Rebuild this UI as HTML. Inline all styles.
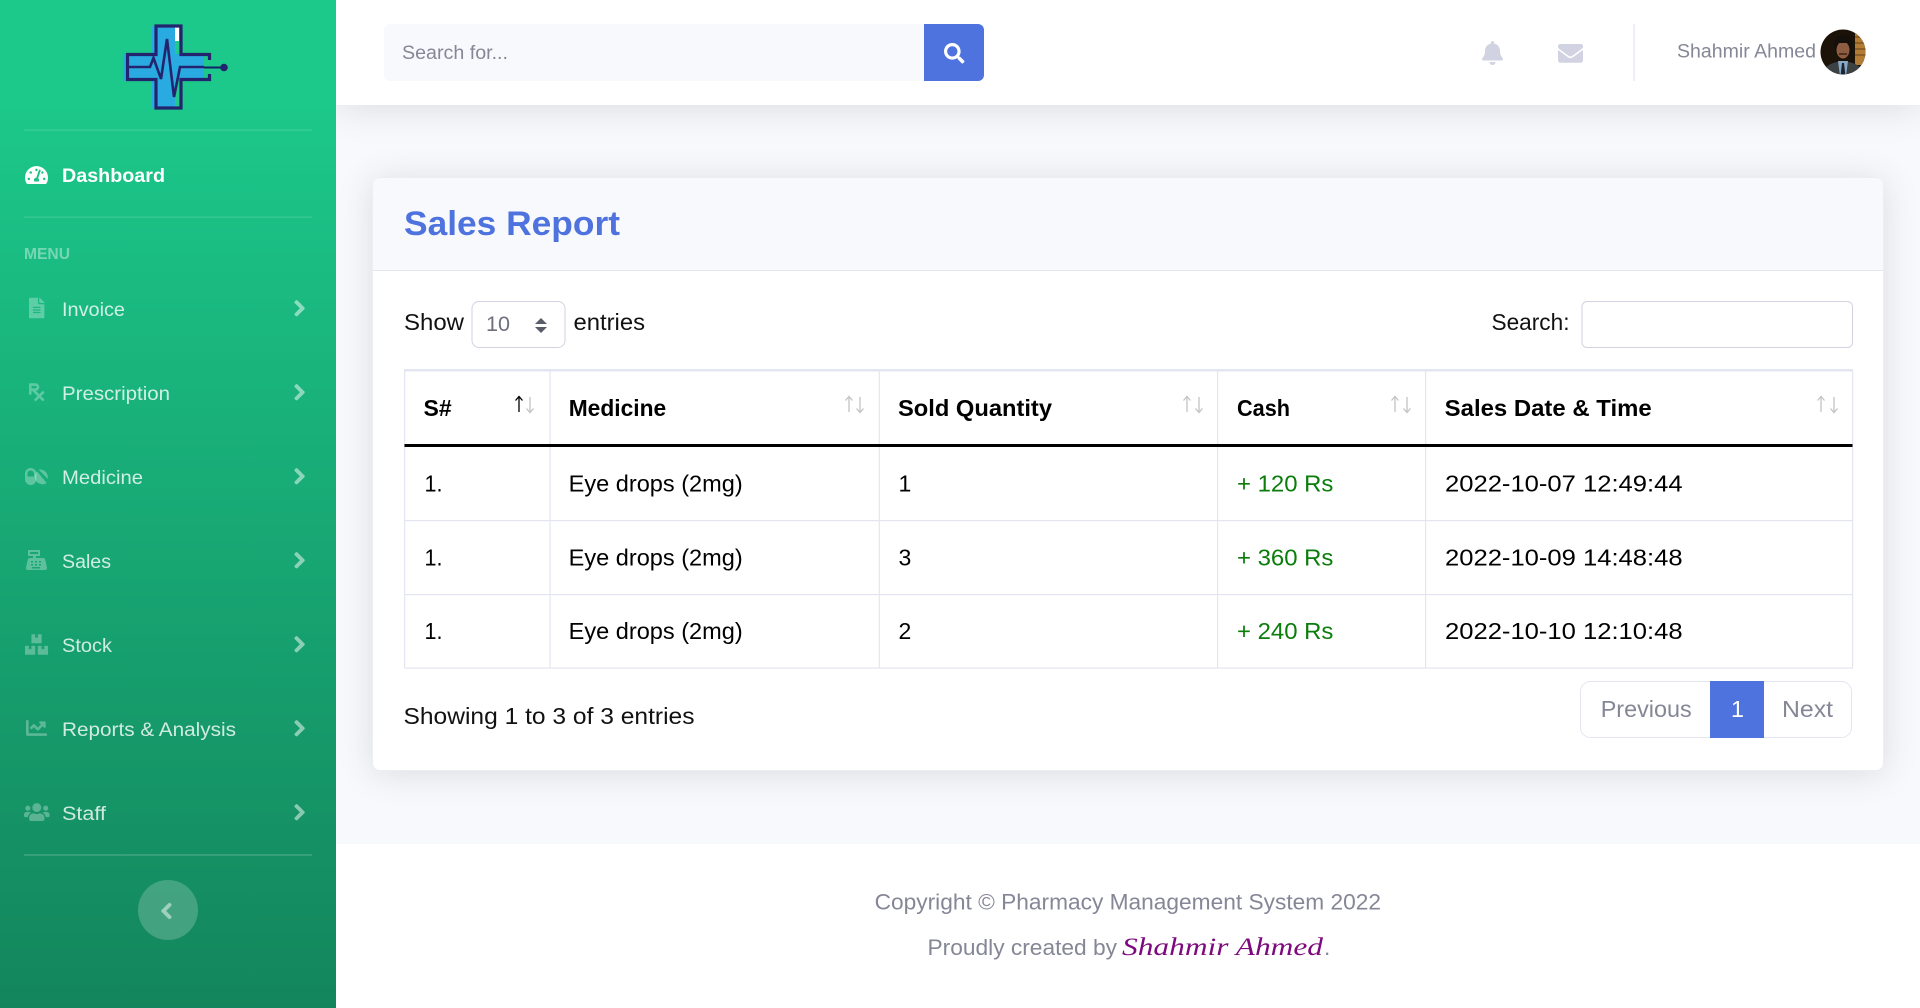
<!DOCTYPE html>
<html lang="en">
<head>
<meta charset="utf-8">
<title>Sales Report</title>
<style>
html,body{margin:0;padding:0;width:1920px;height:1008px;overflow:hidden;background:#f8f9fc;font-family:"Liberation Sans",sans-serif}
.abs{position:absolute;box-sizing:border-box}
#side{left:0;top:0;width:336px;height:1008px;background:linear-gradient(180deg,#1cc88a 10%,#13855c 100%);z-index:3}
#top{left:336px;top:0;width:1584px;height:105px;background:#fff;box-shadow:0 3px 34px rgba(58,59,69,.15);z-index:2}
#card{left:372px;top:177px;width:1512px;height:594px;background:#fff;border:1px solid #eceef5;border-radius:8px;box-shadow:0 3px 34px rgba(58,59,69,.15);overflow:hidden;z-index:1}
#chead{left:0;top:0;width:100%;height:93px;background:#f8f9fc;border-bottom:1.5px solid #e3e6f0}
#foot{left:336px;top:844px;width:1584px;height:164px;background:#fff;z-index:1}
svg#o{position:absolute;left:0;top:0;z-index:4;font-family:"Liberation Sans",sans-serif}
</style>
</head>
<body>
<div id="side" class="abs"></div>
<div id="top" class="abs"></div>
<div id="card" class="abs"><div id="chead" class="abs"></div></div>
<div id="foot" class="abs"></div>

<svg id="o" width="1920" height="1008" viewBox="0 0 1920 1008" xmlns="http://www.w3.org/2000/svg">
<defs>
<path id="chev" d="M285.476 272.971L91.132 467.314c-9.373 9.373-24.569 9.373-33.941 0l-22.667-22.667c-9.357-9.357-9.375-24.522-.04-33.901L188.505 256 34.484 101.255c-9.335-9.379-9.317-24.544.04-33.901l22.667-22.667c9.373-9.373 24.569-9.373 33.941 0L285.475 239.03c9.373 9.372 9.373 24.568.001 33.941z"/>
<clipPath id="av"><circle cx="1843" cy="52" r="22.5"/></clipPath>
<path id="au" d="M0 16V1M-3.5 4.5L0 .5L3.5 4.5" fill="none" stroke-width="1.3"/>
<path id="ad" d="M0 0V15M-3.5 11.5L0 15.5L3.5 11.5" fill="none" stroke-width="1.3"/>
</defs>

<!-- SIDEBAR -->
<g fill="#fff" fill-opacity=".15">
<rect x="24" y="129.5" width="288" height="1.2"/>
<rect x="24" y="216.5" width="288" height="1.2"/>
<rect x="24" y="854" width="288" height="2"/>
</g>
<!-- logo -->
<g>
<path d="M152 26h23v28h29v27h-29v27h-23V81h-29V54h29z" fill="#29abe2"/>
<rect x="175" y="27" width="4" height="14" fill="#fff"/>
<rect x="175" y="41" width="4" height="12" fill="#22c88c"/>
<rect x="175" y="82" width="4" height="25" fill="#22c88c"/>
<path d="M209.500 60V54.500H181V26H156V54.500H127.500V79.500H156V108H181V79.500H209.500V74" fill="none" stroke="#24246e" stroke-width="3.200"/>
<path d="M127 67H150L153.500 58L161 79L167 39L174 97L180 67H204" fill="none" stroke="#24246e" stroke-width="2.600"/>
<path d="M204 67.500H222" stroke="#14206a" stroke-width="2"/>
<circle cx="224" cy="67.500" r="3.800" fill="#24246e"/>
</g>
<!-- dashboard -->
<path transform="translate(25 164.800) scale(.04)" fill="#fff" d="M288 32C128.94 32 0 160.94 0 320c0 52.8 14.25 102.26 39.06 144.8 5.61 9.62 16.3 15.2 27.44 15.2h443c11.14 0 21.83-5.58 27.44-15.2C561.75 422.26 576 372.8 576 320c0-159.06-128.94-288-288-288zm0 64c14.71 0 26.58 10.13 30.32 23.65-1.11 2.26-2.64 4.23-3.45 6.67l-9.22 27.67c-5.13 3.49-10.97 6.01-17.64 6.01-17.67 0-32-14.33-32-32S270.33 96 288 96zM96 384c-17.67 0-32-14.33-32-32s14.33-32 32-32 32 14.33 32 32-14.33 32-32 32zm48-160c-17.67 0-32-14.33-32-32s14.33-32 32-32 32 14.33 32 32-14.33 32-32 32zm246.77-72.41l-61.33 184C343.13 347.33 352 364.54 352 384c0 11.72-3.38 22.55-8.88 32H232.88c-5.5-9.45-8.88-20.28-8.88-32 0-33.94 26.5-61.43 59.9-63.59l61.34-184.01c4.17-12.56 17.73-19.45 30.36-15.17 12.57 4.19 19.35 17.79 15.17 30.36zm14.66 57.2l15.52-46.55c3.47-1.29 7.13-2.23 11.05-2.23 17.67 0 32 14.33 32 32s-14.33 32-32 32c-11.38-.01-20.89-6.28-26.57-15.22zM480 384c-17.67 0-32-14.33-32-32s14.33-32 32-32 32 14.33 32 32-14.33 32-32 32z"/>
<text x="62" y="182" font-size="19.700" font-weight="700" fill="#fff" textLength="103" lengthAdjust="spacingAndGlyphs">Dashboard</text>
<text x="24" y="259" font-size="15.600" font-weight="700" fill="#fff" fill-opacity=".4" textLength="46" lengthAdjust="spacingAndGlyphs">MENU</text>

<g fill="#fff" fill-opacity=".3">
<path transform="translate(29 297.800) scale(.04)" d="M224 136V0H24C10.7 0 0 10.7 0 24v464c0 13.3 10.7 24 24 24h336c13.3 0 24-10.7 24-24V160H248c-13.2 0-24-10.8-24-24zm64 236c0 6.6-5.4 12-12 12H108c-6.6 0-12-5.4-12-12v-8c0-6.6 5.4-12 12-12h168c6.6 0 12 5.4 12 12v8zm0-64c0 6.6-5.4 12-12 12H108c-6.6 0-12-5.4-12-12v-8c0-6.6 5.4-12 12-12h168c6.6 0 12 5.4 12 12v8zm0-72v8c0 6.6-5.4 12-12 12H108c-6.6 0-12-5.4-12-12v-8c0-6.6 5.4-12 12-12h168c6.6 0 12 5.4 12 12zm96-114.1v6.1H256V0h6.1c6.4 0 12.5 2.5 17 7l97.9 98c4.5 4.5 7 10.6 7 16.9z"/>
<path transform="translate(29 382) scale(.04)" d="M301.26 352l78.06-78.06c6.25-6.25 6.25-16.38 0-22.63l-22.63-22.63c-6.25-6.25-16.38-6.25-22.63 0L256 306.74l-83.96-83.96C219.31 216.8 256 176.89 256 128c0-53.02-42.98-96-96-96H16C7.16 32 0 39.16 0 48v256c0 8.84 7.16 16 16 16h32c8.84 0 16-7.16 16-16v-80h18.75l128 128-78.06 78.06c-6.25 6.25-6.25 16.38 0 22.63l22.63 22.63c6.25 6.25 16.38 6.25 22.63 0L256 397.25l78.06 78.06c6.25 6.25 16.38 6.25 22.63 0l22.63-22.63c6.25-6.25 6.25-16.38 0-22.63L301.26 352zM64 96h96c17.64 0 32 14.36 32 32s-14.36 32-32 32H64V96z"/>
<!-- pills -->
<path fill-rule="evenodd" d="M30.700 468a5.700 5.700 0 0 1 5.700 5.700V479.300a5.700 5.700 0 0 1-11.400 0V473.700A5.700 5.700 0 0 1 30.700 468zM30.700 470.500a3.200 3.200 0 0 0-3.200 3.200V476.500h6.400V473.700a3.200 3.200 0 0 0-3.200-3.200z"/>
<path d="M38.700 469.800l9 9c.4-.5.300-.9.200-1.100a8 8 0 0 0-8-8.200c-.5 0-.9 0-1.200.3zM37 471.200a7.800 7.800 0 0 0 .2 11.200a8 8 0 0 0 9.500 .7z"/>
<path fill-rule="evenodd" d="M28 550h12v6h-4v2h7q2 0 2.300 2l1.700 8q0 2-2 2H28q-2 0-2-2l1.700-8q.3-2 2.300-2h3v-2h-5zM30 552v2h8v-2zM31 561v1.500h2V561zM35 561v1.500h2V561zM39 561v1.500h2V561zM31 564v1.500h2V564zM35 564v1.500h2V564zM39 564v1.500h2V564zM32 567v1.500h8V567z"/>
<path transform="translate(25 634.300) scale(.04)" d="M560 288h-80v96l-32-21.3-32 21.3v-96h-80c-8.8 0-16 7.2-16 16v192c0 8.8 7.2 16 16 16h224c8.8 0 16-7.2 16-16V304c0-8.8-7.2-16-16-16zm-384-64h224c8.8 0 16-7.2 16-16V16c0-8.8-7.2-16-16-16h-80v96l-32-21.3L256 96V0h-80c-8.8 0-16 7.2-16 16v192c0 8.8 7.2 16 16 16zm64 64h-80v96l-32-21.3L96 384v-96H16c-8.8 0-16 7.2-16 16v192c0 8.8 7.2 16 16 16h224c8.8 0 16-7.2 16-16V304c0-8.8-7.2-16-16-16z"/>
<path transform="translate(26 717.500) scale(.041)" d="M496 384H64V80c0-8.84-7.16-16-16-16H16C7.16 64 0 71.16 0 80v336c0 17.67 14.33 32 32 32h464c8.84 0 16-7.16 16-16v-32c0-8.84-7.16-16-16-16zM464 96H345.94c-21.38 0-32.09 25.85-16.97 40.97l32.4 32.4L288 242.75l-73.37-73.37c-12.5-12.5-32.76-12.5-45.25 0l-68.69 68.69c-6.25 6.25-6.25 16.38 0 22.63l22.62 22.62c6.25 6.25 16.38 6.25 22.63 0L192 237.25l73.37 73.37c12.5 12.5 32.76 12.5 45.25 0l96-96 32.4 32.4c15.12 15.12 40.97 4.41 40.97-16.97V112c.01-8.84-7.15-16-15.99-16z"/>
<path transform="translate(24 801.800) scale(.04)" d="M96 224c35.3 0 64-28.7 64-64s-28.700-64-64-64-64 28.700-64 64 28.700 64 64 64zm448 0c35.300 0 64-28.700 64-64s-28.700-64-64-64-64 28.700-64 64 28.700 64 64 64zm32 32h-64c-17.600 0-33.500 7.100-45.100 18.600 40.300 22.100 68.900 62 75.100 109.400h66c17.700 0 32-14.300 32-32v-32c0-35.300-28.700-64-64-64zm-256 0c61.900 0 112-50.100 112-112S381.900 32 320 32 208 82.100 208 144s50.100 112 112 112zm76.800 32h-8.300c-20.800 10-43.900 16-68.500 16s-47.600-6-68.500-16h-8.300C179.600 288 128 339.600 128 403.200V432c0 26.500 21.500 48 48 48h288c26.500 0 48-21.500 48-48v-28.800c0-63.600-51.600-115.200-115.200-115.200zm-223.700-13.400C161.500 263.100 145.600 256 128 256H64c-35.300 0-64 28.700-64 64v32c0 17.700 14.300 32 32 32h65.900c6.300-47.400 34.900-87.300 75.200-109.400z"/>
</g>
<g font-size="19.600" fill="#fff" fill-opacity=".8">
<text x="62" y="316" textLength="63" lengthAdjust="spacingAndGlyphs">Invoice</text>
<text x="62" y="400" textLength="108" lengthAdjust="spacingAndGlyphs">Prescription</text>
<text x="62" y="484" textLength="81" lengthAdjust="spacingAndGlyphs">Medicine</text>
<text x="62" y="568" textLength="49" lengthAdjust="spacingAndGlyphs">Sales</text>
<text x="62" y="652" textLength="50" lengthAdjust="spacingAndGlyphs">Stock</text>
<text x="62" y="736" textLength="174" lengthAdjust="spacingAndGlyphs">Reports &amp; Analysis</text>
<text x="62" y="820" textLength="44" lengthAdjust="spacingAndGlyphs">Staff</text>
</g>
<circle cx="168" cy="910" r="30" fill="#fff" fill-opacity=".2"/>
<g fill="#fff" stroke="#fff" stroke-width="28" opacity=".5">
<use href="#chev" transform="translate(294 299.300) scale(.035)"/>
<use href="#chev" transform="translate(294 383.300) scale(.035)"/>
<use href="#chev" transform="translate(294 467.300) scale(.035)"/>
<use href="#chev" transform="translate(294 551.300) scale(.035)"/>
<use href="#chev" transform="translate(294 635.300) scale(.035)"/>
<use href="#chev" transform="translate(294 719.300) scale(.035)"/>
<use href="#chev" transform="translate(294 803.300) scale(.035)"/>
<path transform="translate(160.800 902) scale(.035)" d="M34.52 239.03L228.87 44.69c9.37-9.37 24.57-9.37 33.94 0l22.67 22.67c9.36 9.36 9.37 24.52.04 33.9L131.49 256l154.02 154.75c9.34 9.38 9.32 24.54-.04 33.9l-22.67 22.67c-9.37 9.37-24.57 9.37-33.94 0L34.52 272.97c-9.37-9.37-9.37-24.57 0-33.94z"/>
</g>

<!-- TOPBAR -->
<path d="M390 24H924V81H390a6 6 0 0 1-6-6V30a6 6 0 0 1 6-6z" fill="#f8f9fc"/>
<path d="M924 24H978a6 6 0 0 1 6 6V75a6 6 0 0 1-6 6H924z" fill="#4e73df"/>
<path transform="translate(944 43) scale(.04)" fill="#fff" d="M505 442.7L405.3 343c-4.5-4.5-10.6-7-17-7H372c27.6-35.3 44-79.7 44-128C416 93.1 322.9 0 208 0S0 93.1 0 208s93.1 208 208 208c48.3 0 92.7-16.4 128-44v16.3c0 6.4 2.5 12.5 7 17l99.7 99.7c9.4 9.4 24.6 9.4 33.9 0l28.3-28.3c9.4-9.4 9.4-24.6.1-34zM208 336c-70.7 0-128-57.2-128-128 0-70.7 57.2-128 128-128 70.7 0 128 57.2 128 128 0 70.7-57.2 128-128 128z"/>
<text x="402" y="59" font-size="19.600" fill="#858796" textLength="106" lengthAdjust="spacingAndGlyphs">Search for...</text>
<path transform="translate(1482 41) scale(.047)" fill="#d1d3e2" d="M224 512c35.32 0 63.97-28.65 63.97-64H160.03c0 35.35 28.65 64 63.97 64zm215.39-149.71c-19.32-20.76-55.47-51.99-55.47-154.29 0-77.7-54.48-139.9-127.94-155.16V32c0-17.67-14.32-32-31.98-32s-31.98 14.33-31.98 32v20.84C118.56 68.1 64.08 130.3 64.08 208c0 102.3-36.15 133.53-55.47 154.29-6 6.45-8.66 14.16-8.61 21.71.11 16.4 12.98 32 32.1 32h383.8c19.12 0 32-15.6 32.1-32 .05-7.55-2.61-15.27-8.61-21.71z"/>
<path transform="translate(1558 40.900) scale(.0488)" fill="#d1d3e2" d="M502.3 190.8c3.9-3.1 9.7-.2 9.7 4.7V400c0 26.5-21.5 48-48 48H48c-26.5 0-48-21.5-48-48V195.6c0-5 5.7-7.8 9.7-4.7 22.4 17.4 52.1 39.5 154.1 113.6 21.1 15.4 56.7 47.8 92.2 47.6 35.7.3 72-32.8 92.3-47.6 102-74.1 131.6-96.3 154-113.7zM256 320c23.2.4 56.6-29.2 73.4-41.4 132.7-96.3 142.8-104.7 173.4-128.7 5.8-4.5 9.2-11.5 9.2-18.9v-19c0-26.5-21.5-48-48-48H48C21.5 64 0 85.5 0 112v19c0 7.4 3.4 14.3 9.2 18.9 30.6 23.9 40.7 32.4 173.4 128.7 16.8 12.2 50.2 41.8 73.4 41.400z"/>
<rect x="1633.500" y="24" width="1.200" height="57" fill="#e3e6f0"/>
<text x="1677" y="57.500" font-size="19.600" fill="#858796" textLength="139" lengthAdjust="spacingAndGlyphs">Shahmir Ahmed</text>
<!-- avatar -->
<g clip-path="url(#av)">
<rect x="1820" y="29" width="46" height="46" fill="#1b1208"/>
<rect x="1855" y="29" width="11" height="36" fill="#b27c34"/>
<path d="M1855 37h11M1855 43h11M1855 49h11M1855 55h11" stroke="#7c5522" stroke-width="1.600"/>
<path d="M1834 46q0-11 9-11t9 11l-1 8-8 3-8-3z" fill="#15100c"/>
<ellipse cx="1843" cy="50" rx="6.500" ry="8.500" fill="#8c5d40"/>
<path d="M1836 47q2-9 7-9t7 9l-3-4h-8z" fill="#15100c"/>
<path d="M1839 54h8" stroke="#2c1a10" stroke-width="1.300"/>
<path d="M1822 76q1-11 15-14h12q14 3 15 14z" fill="#3c4244"/>
<path d="M1838 61h10l-2 15h-6z" fill="#88a8c8"/>
<path d="M1842 63h2l1.500 13h-5z" fill="#1c2430"/>
</g>

<!-- CARD -->
<text x="404" y="235" font-size="34.500" font-weight="700" fill="#4e73df" textLength="216" lengthAdjust="spacingAndGlyphs">Sales Report</text>

<g font-size="23" fill="#111">
<text x="404" y="330" textLength="60" lengthAdjust="spacingAndGlyphs">Show</text>
<text x="573.500" y="330" textLength="71.500" lengthAdjust="spacingAndGlyphs">entries</text>
<text x="1491.500" y="330" textLength="78" lengthAdjust="spacingAndGlyphs">Search:</text>
<text x="403.500" y="724" textLength="291" lengthAdjust="spacingAndGlyphs">Showing 1 to 3 of 3 entries</text>
</g>
<rect x="472" y="301.500" width="93" height="46" rx="7" fill="#fff" stroke="#d1d3e2" stroke-width="1"/>
<text x="486" y="331" font-size="21" fill="#6e707e" textLength="24" lengthAdjust="spacingAndGlyphs">10</text>
<path d="M535 324L541 318L547 324zM535 327L541 333L547 327z" fill="#5a5c69"/>
<rect x="1582" y="301.500" width="270.500" height="46" rx="5" fill="#fff" stroke="#d1d3e2" stroke-width="1"/>

<!-- table lines -->
<g fill="#e3e6f0">
<rect x="404" y="369" width="1449" height="2.500"/>
<rect x="404" y="520" width="1449" height="1.200"/>
<rect x="404" y="594" width="1449" height="1.200"/>
<rect x="404" y="667.500" width="1449" height="1.200"/>
<rect x="404" y="371" width="1.200" height="297"/>
<rect x="549.500" y="371" width="1.200" height="297"/>
<rect x="878.700" y="371" width="1.200" height="297"/>
<rect x="1217" y="371" width="1.200" height="297"/>
<rect x="1425" y="371" width="1.200" height="297"/>
<rect x="1852" y="371" width="1.200" height="297"/>
</g>
<rect x="404.500" y="444" width="1448" height="3" fill="#000"/>

<g font-size="23" font-weight="700" fill="#000">
<text x="423.500" y="416">S#</text>
<text x="568.700" y="416" textLength="97.500" lengthAdjust="spacingAndGlyphs">Medicine</text>
<text x="898" y="416" textLength="154" lengthAdjust="spacingAndGlyphs">Sold Quantity</text>
<text x="1237" y="416" textLength="53" lengthAdjust="spacingAndGlyphs">Cash</text>
<text x="1444.700" y="416" textLength="207" lengthAdjust="spacingAndGlyphs">Sales Date &amp; Time</text>
</g>
<g stroke="#000"><use href="#au" transform="translate(519 396)"/></g>
<g stroke="#c4c4c4">
<use href="#ad" transform="translate(530 397)"/>
<use href="#au" transform="translate(849 396)"/><use href="#ad" transform="translate(860 397)"/>
<use href="#au" transform="translate(1187 396)"/><use href="#ad" transform="translate(1199 397)"/>
<use href="#au" transform="translate(1395 396)"/><use href="#ad" transform="translate(1407 397)"/>
<use href="#au" transform="translate(1821 396)"/><use href="#ad" transform="translate(1834 397)"/>
</g>

<g font-size="23" fill="#000">
<text x="424.500" y="491.500" textLength="18" lengthAdjust="spacingAndGlyphs">1.</text>
<text x="568.700" y="491.500" textLength="174" lengthAdjust="spacingAndGlyphs">Eye drops (2mg)</text>
<text x="898.500" y="491.500">1</text>
<text x="1445" y="491.500" textLength="237.600" lengthAdjust="spacingAndGlyphs">2022-10-07 12:49:44</text>
<text x="424.500" y="565.500" textLength="18" lengthAdjust="spacingAndGlyphs">1.</text>
<text x="568.700" y="565.500" textLength="174" lengthAdjust="spacingAndGlyphs">Eye drops (2mg)</text>
<text x="898.500" y="565.500">3</text>
<text x="1445" y="565.500" textLength="237.600" lengthAdjust="spacingAndGlyphs">2022-10-09 14:48:48</text>
<text x="424.500" y="639" textLength="18" lengthAdjust="spacingAndGlyphs">1.</text>
<text x="568.700" y="639" textLength="174" lengthAdjust="spacingAndGlyphs">Eye drops (2mg)</text>
<text x="898.500" y="639">2</text>
<text x="1445" y="639" textLength="237.600" lengthAdjust="spacingAndGlyphs">2022-10-10 12:10:48</text>
</g>
<g font-size="23" fill="#0a7d0a">
<text x="1237" y="491.500" textLength="96.400" lengthAdjust="spacingAndGlyphs">+ 120 Rs</text>
<text x="1237" y="565.500" textLength="96.400" lengthAdjust="spacingAndGlyphs">+ 360 Rs</text>
<text x="1237" y="639" textLength="96.400" lengthAdjust="spacingAndGlyphs">+ 240 Rs</text>
</g>

<!-- pagination -->
<rect x="1580.500" y="681.500" width="271" height="56" rx="10" fill="#fff" stroke="#e3e6f0" stroke-width="1"/>
<rect x="1710" y="681" width="54" height="57" fill="#4e73df"/>
<text x="1600.700" y="717" font-size="23.400" fill="#858796" textLength="91" lengthAdjust="spacingAndGlyphs">Previous</text>
<text x="1731" y="717" font-size="23.400" fill="#fff">1</text>
<text x="1782" y="717" font-size="23.400" fill="#858796" textLength="51" lengthAdjust="spacingAndGlyphs">Next</text>

<!-- FOOTER -->
<g font-size="22.500" fill="#858796">
<text x="874.600" y="909.500" textLength="506.400" lengthAdjust="spacingAndGlyphs">Copyright © Pharmacy Management System 2022</text>
<text x="927.500" y="955" textLength="189.500" lengthAdjust="spacingAndGlyphs">Proudly created by</text>
<text x="1324" y="955">.</text>
</g>
<text x="1122" y="955" font-family="'Liberation Serif',serif" font-style="italic" font-size="25" fill="#7d0a7d" textLength="201" lengthAdjust="spacingAndGlyphs">Shahmir Ahmed</text>
</svg>
</body>
</html>
